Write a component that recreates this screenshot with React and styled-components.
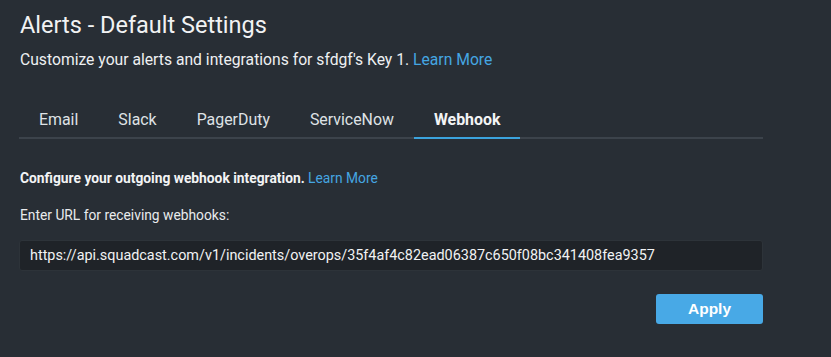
import React from "react";
import styled, { createGlobalStyle } from "styled-components";

const Global = createGlobalStyle`
  html, body { margin: 0; padding: 0; background: #282e35; }
  body { font-family: Roboto, "Noto Sans", sans-serif; }
`;

const Page = styled.div`
  width: 831px;
  height: 357px;
  box-sizing: border-box;
  padding: 10px 68px 0 19px;
  background: #282e35;
  color: #eef0f2;
  overflow: hidden;
`;

const Title = styled.h1`
  margin: 0 0 0 1px;
  font-size: 23.5px;
  font-weight: 400;
  line-height: 30px;
  color: #f1f2f3;
`;

const Subtitle = styled.p`
  margin: 10px 0 0 1px;
  font-size: 15.7px;
  line-height: 20px;
  color: #eef0f2;
`;

const Link = styled.a`
  color: #45a6e2;
  text-decoration: none;
  font-weight: 400;
`;

const Tabs = styled.div`
  display: flex;
  margin-top: 20px;
  border-bottom: 2px solid #3c434b;
`;

const Tab = styled.div`
  padding: 20px 20px 7px;
  font-size: 15.9px;
  line-height: 20px;
  font-weight: ${(p) => (p.$active ? 700 : 400)};
  color: ${(p) => (p.$active ? "#f3f4f5" : "#dfe2e5")};
  margin-bottom: -2px;
  border-bottom: 2px solid ${(p) => (p.$active ? "#3ba3dd" : "transparent")};
`;

const Intro = styled.p`
  margin: 30px 0 0 1px;
  font-size: 13.8px;
  line-height: 18px;
  font-weight: 700;
  color: #f3f4f5;
`;

const Label = styled.p`
  margin: 19px 0 0 1px;
  font-size: 13.8px;
  line-height: 18px;
  color: #e9ebed;
`;

const UrlInput = styled.div`
  margin-top: 16px;
  height: 31px;
  box-sizing: border-box;
  padding: 0 10px;
  display: flex;
  align-items: center;
  background: #1f2328;
  border: 1px solid #2d3339;
  border-radius: 3px;
  font-size: 14.4px;
  color: #f1f2f3;
`;

const Actions = styled.div`
  display: flex;
  justify-content: flex-end;
  margin-top: 23px;
`;

const Button = styled.button`
  width: 107px;
  height: 30px;
  border: none;
  border-radius: 3px;
  background: #48a9e6;
  color: #ffffff;
  font-family: "Liberation Sans", Arial, sans-serif;
  font-weight: 700;
  font-size: 15.5px;
  cursor: pointer;
`;

const tabs = ["Email", "Slack", "PagerDuty", "ServiceNow", "Webhook"];

export default function App() {
  return (
    <>
      <Global />
      <Page>
        <Title>Alerts - Default Settings</Title>
        <Subtitle>
          Customize your alerts and integrations for sfdgf's Key 1. <Link>Learn More</Link>
        </Subtitle>
        <Tabs>
          {tabs.map((t) => (
            <Tab key={t} $active={t === "Webhook"}>
              {t}
            </Tab>
          ))}
        </Tabs>
        <Intro>
          Configure your outgoing webhook integration. <Link>Learn More</Link>
        </Intro>
        <Label>Enter URL for receiving webhooks:</Label>
        <UrlInput>
          https://api.squadcast.com/v1/incidents/overops/35f4af4c82ead06387c650f08bc341408fea9357
        </UrlInput>
        <Actions>
          <Button>Apply</Button>
        </Actions>
      </Page>
    </>
  );
}
